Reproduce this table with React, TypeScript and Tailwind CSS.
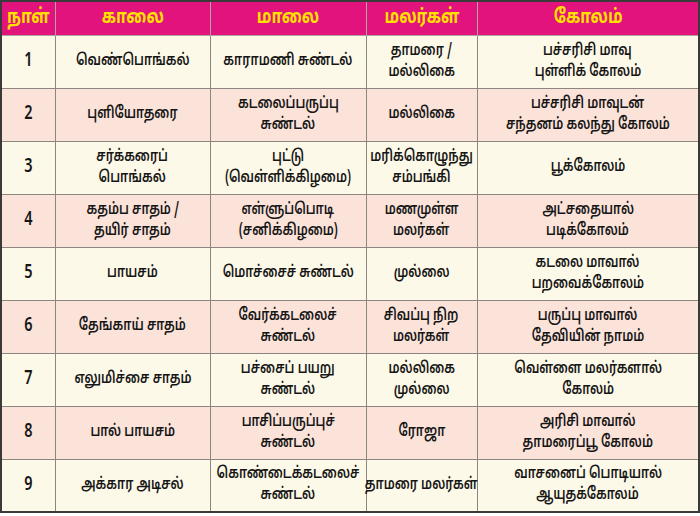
const headers = ["நாள்", "காலை", "மாலை", "மலர்கள்", "கோலம்"];

const rows: string[][][] = [
  [["1"], ["வெண்பொங்கல்"], ["காராமணி சுண்டல்"], ["தாமரை /", "மல்லிகை"], ["பச்சரிசி மாவு", "புள்ளிக் கோலம்"]],
  [["2"], ["புளியோதரை"], ["கடலைப்பருப்பு", "சுண்டல்"], ["மல்லிகை"], ["பச்சரிசி மாவுடன்", "சந்தனம் கலந்து கோலம்"]],
  [["3"], ["சர்க்கரைப்", "பொங்கல்"], ["புட்டு", "(வெள்ளிக்கிழமை)"], ["மரிக்கொழுந்து", "சம்பங்கி"], ["பூக்கோலம்"]],
  [["4"], ["கதம்ப சாதம் /", "தயிர் சாதம்"], ["எள்ளுப்பொடி", "(சனிக்கிழமை)"], ["மணமுள்ள", "மலர்கள்"], ["அட்சதையால்", "படிக்கோலம்"]],
  [["5"], ["பாயசம்"], ["மொச்சைச் சுண்டல்"], ["முல்லை"], ["கடலை மாவால்", "பறவைக்கோலம்"]],
  [["6"], ["தேங்காய் சாதம்"], ["வேர்க்கடலைச்", "சுண்டல்"], ["சிவப்பு நிற", "மலர்கள்"], ["பருப்பு மாவால்", "தேவியின் நாமம்"]],
  [["7"], ["எலுமிச்சை சாதம்"], ["பச்சைப் பயறு", "சுண்டல்"], ["மல்லிகை", "முல்லை"], ["வெள்ளை மலர்களால்", "கோலம்"]],
  [["8"], ["பால் பாயசம்"], ["பாசிப்பருப்புச்", "சுண்டல்"], ["ரோஜா"], ["அரிசி மாவால்", "தாமரைப்பூ கோலம்"]],
  [["9"], ["அக்கார அடிசல்"], ["கொண்டைக்கடலைச்", "சுண்டல்"], ["தாமரை மலர்கள்"], ["வாசனைப் பொடியால்", "ஆயுதக்கோலம்"]],
];

const widths = ["w-[54px]", "w-[155px]", "w-[156px]", "w-[111px]", "w-[222px]"];

export default function App() {
  return (
    <div className="w-[700px] h-[516px] bg-white" style={{ fontFamily: '"Noto Sans Tamil", "Liberation Sans", sans-serif' }}>
      <table className="w-[699px] table-fixed border-collapse border-2 border-[#3a3a3a]">
        <thead>
          <tr className="h-[34px] bg-[#e2137c]">
            {headers.map((h, i) => (
              <th
                key={i}
                className={`${widths[i]} border border-[#b0a6a0] p-0 text-[20px] font-bold text-[#ffe000] leading-none`}
              >
                <div className="flex justify-center">
                  <span className="whitespace-nowrap scale-x-[0.78]">{h}</span>
                </div>
              </th>
            ))}
          </tr>
        </thead>
        <tbody>
          {rows.map((row, r) => (
            <tr key={r} className={`h-[53px] ${r % 2 === 0 ? "bg-[#fdf9e8]" : "bg-[#fbe3da]"}`}>
              {row.map((cell, c) => (
                <td
                  key={c}
                  className={`border border-[#8c8680] p-0 align-middle leading-[21px] text-[#161616] font-semibold ${c === 0 ? "text-[19px]" : "text-[16px]"}`}
                >
                  <div className="flex flex-col items-center">
                    {cell.map((line, k) => (
                      <span key={k} className="whitespace-nowrap scale-x-[0.76]">{line}</span>
                    ))}
                  </div>
                </td>
              ))}
            </tr>
          ))}
        </tbody>
      </table>
    </div>
  );
}
